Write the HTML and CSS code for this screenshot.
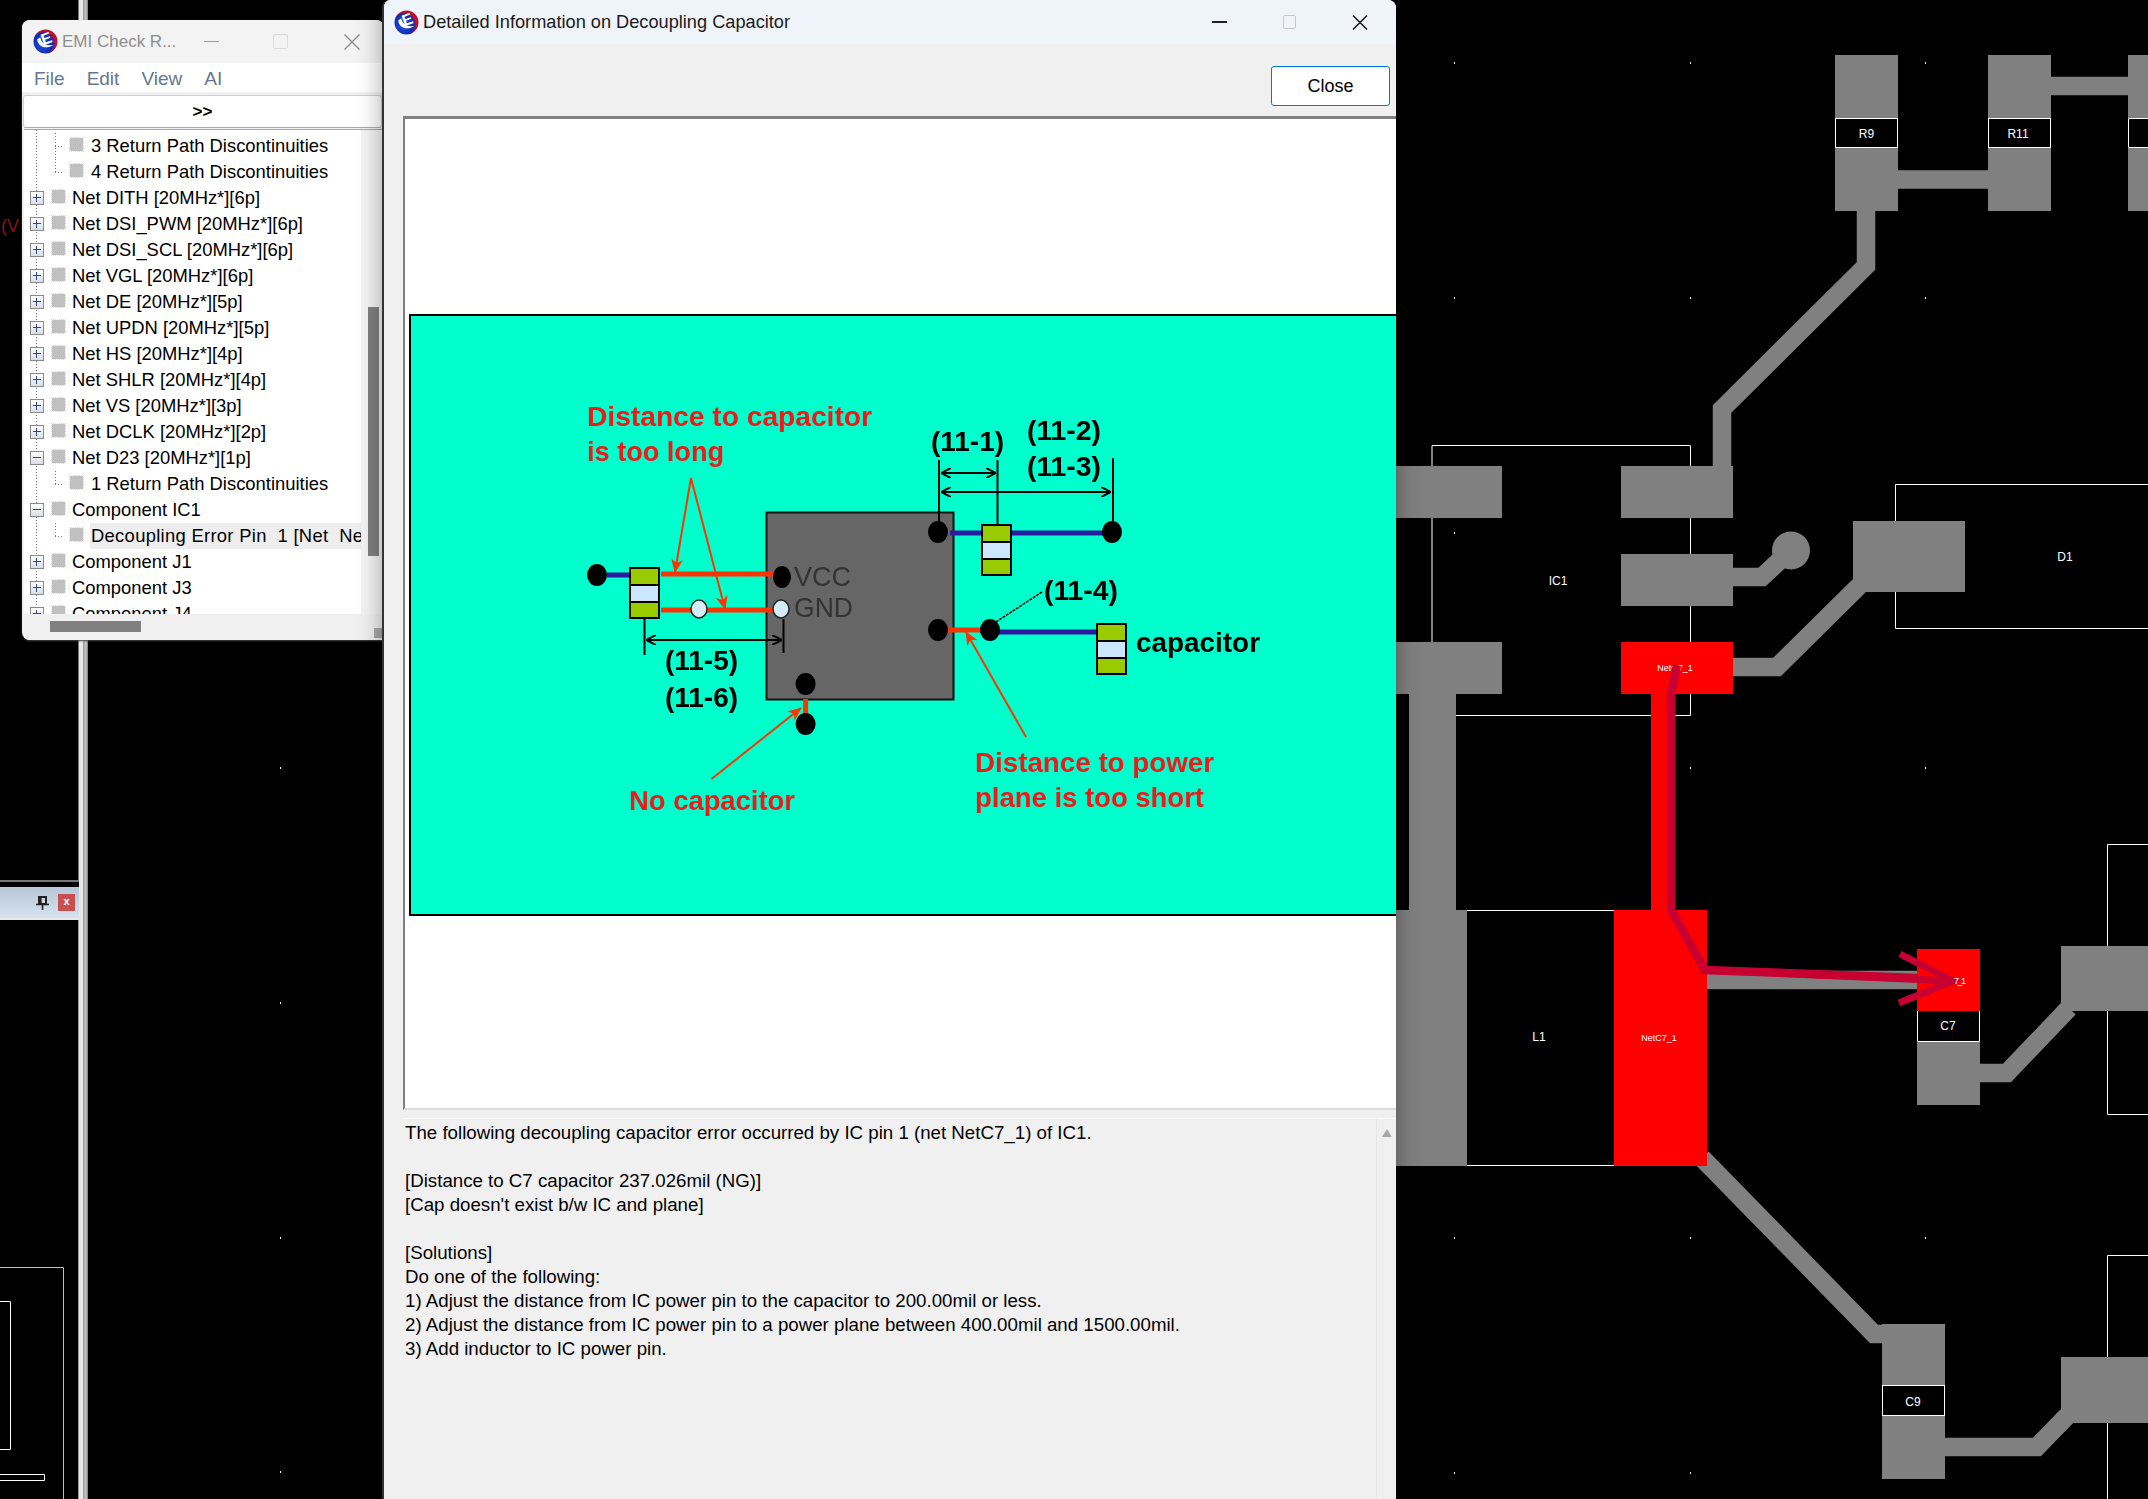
FILE: index.html
```html
<!DOCTYPE html>
<html>

<head>
    <title>Detailed Information on Decoupling Capacitor</title>
    <link rel="stylesheet" href="styles.css">
</head>

<body>
    <!-- Board canvas behind the windows -->
    <svg class="board" width="2148" height="1499" viewBox="0 0 2148 1499">
        <g fill="#808080">
            <rect x="1835" y="55" width="63" height="63" />
            <rect x="1835" y="148" width="63" height="63" />
            <rect x="1988" y="55" width="63" height="63" />
            <rect x="1988" y="148" width="63" height="63" />
            <rect x="2128" y="55" width="20" height="63" />
            <rect x="2128" y="148" width="20" height="63" />
            <rect x="1396" y="466" width="106" height="52" />
            <rect x="1621" y="466" width="112" height="52" />
            <rect x="1621" y="554" width="112" height="52" />
            <rect x="1396" y="642" width="106" height="52" />
            <rect x="1409" y="694" width="47" height="216" />
            <rect x="1396" y="910" width="71" height="256" />
            <rect x="1853" y="521" width="112" height="71" />
            <rect x="1917" y="1042" width="63" height="63" />
            <rect x="2061" y="946" width="87" height="65" />
            <rect x="1882" y="1324" width="63" height="61" />
            <rect x="1882" y="1416" width="63" height="63" />
            <rect x="2061" y="1357" width="87" height="66" />
            <circle cx="1791" cy="550.5" r="19" />
        </g>
        <g fill="none" stroke="#808080" stroke-width="18.5">
            <path d="M2051 86H2128" />
            <path d="M1898 179.5H1988" />
            <path d="M1866 211V266L1722 409V466" />
            <path d="M1733 577H1762L1791 550" />
            <path d="M1733 667H1777L1859 586" />
            <path d="M1707 980H1917" />
            <path d="M1980 1073H2007L2069 1008" />
            <path d="M1702 1158L1874 1334H1882" />
            <path d="M1945 1447H2037L2067 1416" />
        </g>
        <g fill="none" stroke="#fff" stroke-width="1">
            <path d="M1432 466V445.5H1690.5V466M1432 518V642M1690.5 518V554M1690.5 606V642M1456 715.5H1690.5V694" />
            <path d="M2148 484.5H1895.5V521M1895.5 592V628.5H2148" />
            <path d="M1467 910.5H1614M1467 1165.5H1614" />
            <path d="M2148 844.5H2107.5V946M2107.5 1011V1114.5H2148" />
            <path d="M2148 1255.5H2107.5V1357M2107.5 1423V1499" />
            <rect x="1835.5" y="118.5" width="62" height="29" />
            <rect x="1988.5" y="118.5" width="62" height="29" />
            <path d="M2148 118.5H2128.5V147.5H2148" />
            <path d="M1917.5 1011V1041.5H1979.5V1011" />
            <rect x="1882.5" y="1385.5" width="62" height="30" />
        </g>
        <g fill="#f00">
            <rect x="1621" y="642" width="112" height="52" />
            <rect x="1651" y="694" width="24" height="216" />
            <rect x="1614" y="910" width="93" height="256" />
            <rect x="1917" y="949" width="63" height="62" />
        </g>
        <g class="board-label">
            <text x="1866.5" y="138">R9</text>
            <text x="2018" y="138">R11</text>
            <text x="1558" y="585">IC1</text>
            <text x="2065" y="561">D1</text>
            <text x="1539" y="1041">L1</text>
            <text x="1948" y="1030">C7</text>
            <text x="1913" y="1406">C9</text>
        </g>
        <g class="board-label small">
            <text x="1675" y="671">NetC7_1</text>
            <text x="1659" y="1041">NetC7_1</text>
        </g>
        <g fill="none" stroke="#c80032">
            <path stroke-width="8.5" d="M1677 665L1671 693V910L1705 970L1917 978" />
            <path stroke-width="7" d="M1705 970L1953 981" />
            <path stroke-width="7" d="M1900 954L1953 981L1899 1003" />
        </g>
        <text class="board-label small" x="1960" y="984" textLength="12">7_1</text>
        <g fill="#fff">
            <rect x="1454" y="62" width="1" height="2" />
            <rect x="1690" y="62" width="1" height="2" />
            <rect x="1925" y="62" width="1" height="2" />
            <rect x="1454" y="297" width="1" height="2" />
            <rect x="1690" y="297" width="1" height="2" />
            <rect x="1925" y="297" width="1" height="2" />
            <rect x="1454" y="532" width="1" height="2" />
            <rect x="1690" y="532" width="1" height="2" />
            <rect x="1690" y="767" width="1" height="2" />
            <rect x="1925" y="767" width="1" height="2" />
            <rect x="1454" y="1237" width="1" height="2" />
            <rect x="1690" y="1237" width="1" height="2" />
            <rect x="1925" y="1237" width="1" height="2" />
            <rect x="1454" y="1472" width="1" height="2" />
            <rect x="1690" y="1472" width="1" height="2" />
            <rect x="280" y="767" width="1" height="2" />
            <rect x="280" y="1002" width="1" height="2" />
            <rect x="280" y="1237" width="1" height="2" />
            <rect x="280" y="1471" width="1" height="2" />
        </g>
        <g fill="none">
            <path stroke="#e0d000" d="M0 1267.5H63.5V1499" />
            <path stroke="#fff" d="M0 1301.5H10.5V1449.5H0" />
            <path stroke="#fff" d="M0 1474.5H44.5V1480.5H0" />
        </g>
        <text class="probe-text" x="1" y="232">(V</text>
    </svg>

    <!-- Docked panel on the far left -->
    <div class="dock">
        <div class="dock-top"></div>
        <div class="dock-title">
            <svg class="dock-pin" width="13" height="14" viewBox="0 0 13 14">
                <path d="M3 1H10V8H3Z M4.6 1V8" fill="none" stroke="#222" stroke-width="2" />
                <path d="M0 8.5H13M6.5 9V14" stroke="#222" stroke-width="1.6" />
            </svg>
            <span class="dock-close">x</span>
        </div>
        <div class="dock-body"></div>
    </div>
    <div class="splitter"></div>

    <!-- EMI Check Result window -->
    <div class="emi-window">
        <div class="emi-title">
            <svg class="app-icon" width="25" height="25" viewBox="0 0 24 24">
                <use href="#logo" />
            </svg>
            <span class="emi-name">EMI Check R...</span>
            <span class="win-btn min"></span>
            <span class="win-btn max"></span>
            <svg class="win-x" width="16" height="16" viewBox="0 0 16 16">
                <path d="M0.5 0.5L15.5 15.5M15.5 0.5L0.5 15.5" stroke="#8a8a8a" stroke-width="1.3" />
            </svg>
        </div>
        <div class="menu-bar">
            <span>File</span>
            <span>Edit</span>
            <span>View</span>
            <span>AI</span>
        </div>
        <div class="tool-button">&gt;&gt;</div>
        <div class="tree-wrap">
            <div class="tree" id="tree"></div>
            <div class="vscroll"><div class="vthumb"></div></div>
        </div>
        <div class="hscroll">
            <div class="hthumb"></div>
            <div class="grip"></div>
        </div>
    </div>

    <!-- Decoupling capacitor detail dialog -->
    <div class="dialog">
        <div class="dialog-title">
            <svg class="app-icon" width="25" height="25" viewBox="0 0 24 24">
                <defs>
                    <radialGradient id="logoFill" cx="0.38" cy="0.6" r="0.68">
                        <stop offset="0" stop-color="#2a55e0" />
                        <stop offset="0.62" stop-color="#0a2cb0" />
                        <stop offset="0.8" stop-color="#c8102e" />
                        <stop offset="1" stop-color="#b00c20" />
                    </radialGradient>
                    <g id="logo">
                        <circle cx="12" cy="12" r="11.5" fill="url(#logoFill)" />
                        <path d="M4 10C5 17 12 20 20 15C13 17 8 14 7 8Z" fill="#fff" />
                        <text x="0" y="0" class="logo-letter" transform="translate(14.5 14) rotate(-20)">E</text>
                    </g>
                </defs>
                <use href="#logo" />
            </svg>
            <span class="dialog-name">Detailed Information on Decoupling Capacitor</span>
            <span class="dlg-btn min"></span>
            <span class="dlg-btn max"></span>
            <svg class="dlg-x" width="16" height="15" viewBox="0 0 16 15">
                <path d="M1 0.5L15 14.5M15 0.5L1 14.5" stroke="#111" stroke-width="1.4" />
            </svg>
        </div>
        <div class="dialog-actions">
            <button class="close-button">Close</button>
        </div>
        <div class="image-pane">
            <svg class="diagram" width="986" height="602" viewBox="410 314 986 602">
                <defs>
                    <marker id="headRed" markerWidth="14" markerHeight="12" refX="13" refY="6" orient="auto" markerUnits="userSpaceOnUse">
                        <path d="M0 0L14 6L0 12L4 6Z" fill="#ff3300" />
                    </marker>
                    <marker id="headEnd" markerWidth="10" markerHeight="10" refX="10" refY="5" orient="auto" markerUnits="userSpaceOnUse">
                        <path d="M0 0L10 5L0 10" fill="none" stroke="#000" stroke-width="2" />
                    </marker>
                    <marker id="headStart" markerWidth="10" markerHeight="10" refX="0" refY="5" orient="auto" markerUnits="userSpaceOnUse">
                        <path d="M10 0L0 5L10 10" fill="none" stroke="#000" stroke-width="2" />
                    </marker>
                    <g id="cap">
                        <rect x="0" y="0" width="31" height="52" fill="#000" />
                        <rect x="2" y="2" width="27" height="15" fill="#99cc00" />
                        <rect x="2" y="19" width="27" height="15" fill="#cce6ff" />
                        <rect x="2" y="36" width="27" height="14" fill="#99cc00" />
                    </g>
                </defs>
                <rect x="410" y="315" width="987" height="600" fill="#00ffcc" stroke="#000" stroke-width="2" />

                <rect x="766.5" y="512.5" width="187" height="187" fill="#666" stroke="#111" stroke-width="2" />

                <!-- traces -->
                <path d="M950 533H1104M998 632H1097M607 575H630" stroke="#2a1aa0" stroke-width="5" fill="none" />
                <path d="M661 574H773M661 610H773M948 630H982M805.6 699V715" stroke="#ff3300" stroke-width="5" fill="none" />

                <use href="#cap" x="981" y="524" />
                <use href="#cap" x="629" y="567" />
                <use href="#cap" x="1096" y="623" />

                <!-- pins -->
                <g fill="#000">
                    <ellipse cx="938" cy="532" rx="10" ry="11" />
                    <ellipse cx="1112" cy="532" rx="10" ry="11" />
                    <ellipse cx="597" cy="575" rx="10" ry="11" />
                    <ellipse cx="782" cy="577" rx="9" ry="11" />
                    <ellipse cx="938" cy="630" rx="10" ry="11" />
                    <ellipse cx="990" cy="630" rx="10" ry="11" />
                    <ellipse cx="805.6" cy="684" rx="10" ry="11" />
                    <ellipse cx="805.6" cy="724" rx="10" ry="11" />
                </g>
                <g fill="#d6ecf8" stroke="#222" stroke-width="1.5">
                    <ellipse cx="781" cy="609" rx="8" ry="9" />
                    <ellipse cx="699" cy="609" rx="8" ry="9" />
                </g>

                <!-- dimension lines -->
                <g stroke="#000" stroke-width="2" fill="none">
                    <path d="M939 460V523M997.5 460V524M1113 458V523M644.5 619V655M783.5 619V653" />
                    <path d="M941 473H996" marker-start="url(#headStart)" marker-end="url(#headEnd)" />
                    <path d="M941 492H1111" marker-start="url(#headStart)" marker-end="url(#headEnd)" />
                    <path d="M646 640H782" marker-start="url(#headStart)" marker-end="url(#headEnd)" />
                    <path d="M1042 592L996 622" stroke-dasharray="3 1" stroke-width="1.5" />
                </g>

                <!-- red callouts -->
                <g stroke="#ff3300" stroke-width="2" fill="none">
                    <path d="M691 478L675 572" marker-end="url(#headRed)" />
                    <path d="M691 478L725 609" marker-end="url(#headRed)" />
                    <path d="M711.5 779L801 708" marker-end="url(#headRed)" />
                    <path d="M1026 737L966 632" marker-end="url(#headRed)" />
                </g>

                <text class="note" x="587" y="426" textLength="285" lengthAdjust="spacingAndGlyphs">Distance to capacitor</text>
                <text class="note" x="587" y="461" textLength="137" lengthAdjust="spacingAndGlyphs">is too long</text>
                <text class="note" x="629" y="810" textLength="166" lengthAdjust="spacingAndGlyphs">No capacitor</text>
                <text class="note" x="975" y="772" textLength="239" lengthAdjust="spacingAndGlyphs">Distance to power</text>
                <text class="note" x="975" y="807" textLength="229" lengthAdjust="spacingAndGlyphs">plane is too short</text>

                <text class="dim" x="931" y="451" textLength="73" lengthAdjust="spacingAndGlyphs">(11-1)</text>
                <text class="dim" x="1027" y="440" textLength="74" lengthAdjust="spacingAndGlyphs">(11-2)</text>
                <text class="dim" x="1027" y="476" textLength="74" lengthAdjust="spacingAndGlyphs">(11-3)</text>
                <text class="dim" x="1044" y="600" textLength="74" lengthAdjust="spacingAndGlyphs">(11-4)</text>
                <text class="dim" x="665" y="670" textLength="73" lengthAdjust="spacingAndGlyphs">(11-5)</text>
                <text class="dim" x="665" y="707" textLength="73" lengthAdjust="spacingAndGlyphs">(11-6)</text>
                <text class="dim" x="1136" y="652" textLength="124" lengthAdjust="spacingAndGlyphs">capacitor</text>

                <text class="pin-name" x="794" y="586" textLength="57" lengthAdjust="spacingAndGlyphs">VCC</text>
                <text class="pin-name" x="794" y="617" textLength="59" lengthAdjust="spacingAndGlyphs">GND</text>
            </svg>
        </div>
        <div class="message-pane">
            <div class="message">
                <p>The following decoupling capacitor error occurred by IC pin 1 (net NetC7_1) of IC1.</p>
                <p>&nbsp;</p>
                <p>[Distance to C7 capacitor 237.026mil (NG)]</p>
                <p>[Cap doesn't exist b/w IC and plane]</p>
                <p>&nbsp;</p>
                <p>[Solutions]</p>
                <p>Do one of the following:</p>
                <p>1) Adjust the distance from IC power pin to the capacitor to 200.00mil or less.</p>
                <p>2) Adjust the distance from IC power pin to a power plane between 400.00mil and 1500.00mil.</p>
                <p>3) Add inductor to IC power pin.</p>
            </div>
            <div class="message-scroll"><span class="scroll-up"></span></div>
        </div>
    </div>

    <script>
        // level 0 = net or component, level 1 = child entry
        const rows = [
            { level: 1, text: '3 Return Path Discontinuities' },
            { level: 1, text: '4 Return Path Discontinuities', last: true },
            { level: 0, box: 'plus', text: 'Net DITH [20MHz*][6p]' },
            { level: 0, box: 'plus', text: 'Net DSI_PWM [20MHz*][6p]' },
            { level: 0, box: 'plus', text: 'Net DSI_SCL [20MHz*][6p]' },
            { level: 0, box: 'plus', text: 'Net VGL [20MHz*][6p]' },
            { level: 0, box: 'plus', text: 'Net DE [20MHz*][5p]' },
            { level: 0, box: 'plus', text: 'Net UPDN [20MHz*][5p]' },
            { level: 0, box: 'plus', text: 'Net HS [20MHz*][4p]' },
            { level: 0, box: 'plus', text: 'Net SHLR [20MHz*][4p]' },
            { level: 0, box: 'plus', text: 'Net VS [20MHz*][3p]' },
            { level: 0, box: 'plus', text: 'Net DCLK [20MHz*][2p]' },
            { level: 0, box: 'minus', text: 'Net D23 [20MHz*][1p]' },
            { level: 1, text: '1 Return Path Discontinuities', last: true },
            { level: 0, box: 'minus', text: 'Component IC1' },
            { level: 1, text: 'Decoupling Error Pin  1 [Net  NetC7_1]', last: true, selected: true },
            { level: 0, box: 'plus', text: 'Component J1' },
            { level: 0, box: 'plus', text: 'Component J3' },
            { level: 0, box: 'plus', text: 'Component J4' }
        ];

        const tree = document.getElementById('tree');
        for (const row of rows) {
            const item = document.createElement('div');
            item.className = 'tree-row level-' + row.level;

            const lead = document.createElement('span');
            if (row.box) {
                lead.className = 'expander ' + row.box;
            } else {
                lead.className = row.last ? 'elbow last' : 'elbow';
            }
            item.appendChild(lead);

            const mark = document.createElement('span');
            mark.className = 'mark';
            item.appendChild(mark);

            const label = document.createElement('span');
            label.className = row.selected ? 'label selected' : 'label';
            label.textContent = row.text;
            item.appendChild(label);

            tree.appendChild(item);
        }
    </script>
</body>

</html>
```

FILE: styles.css
```css
html, body {
    margin: 0;
    height: 100%;
}

body {
    position: relative;
    width: 2148px;
    height: 1499px;
    overflow: hidden;
    background-color: #000;
    font-family: 'Liberation Sans', Arial, sans-serif;
    color: #000;
}

.board {
    position: absolute;
    left: 0;
    top: 0;
}

.board-label {
    fill: #fff;
    font-size: 12px;
    text-anchor: middle;
}

.board-label.small {
    font-size: 9px;
}

.probe-text {
    fill: #8a1020;
    font-size: 18px;
}

/* Left dock */
.dock {
    position: absolute;
    left: 0;
    top: 0;
    width: 79px;
    height: 1499px;
    display: flex;
    flex-direction: column;
}

.dock-top {
    height: 882px;
    box-sizing: border-box;
    border-right: 1px solid #777;
    border-bottom: 2px solid #777;
    flex: none;
}

.dock-title {
    margin-top: 5px;
    height: 31px;
    flex: none;
    display: flex;
    align-items: center;
    justify-content: flex-end;
    gap: 9px;
    padding-right: 4px;
    background: linear-gradient(#b7c6d6, #d6e3ef);
    border-bottom: 2px solid #e8e8e8;
}

.dock-close {
    width: 17px;
    height: 17px;
    background-color: #c85050;
    color: #fff;
    font-size: 11px;
    font-weight: bold;
    line-height: 15px;
    text-align: center;
}

.dock-body {
    flex: 1;
    border-right: 1px solid #999;
}

.splitter {
    position: absolute;
    left: 79px;
    top: 0;
    width: 9px;
    height: 1499px;
    background: linear-gradient(to right, #e8e8e8 0, #e8e8e8 4px, #9a9a9a 4px, #c8c8c8 7px, #777 9px);
}

/* EMI window */
.emi-window {
    position: absolute;
    left: 22px;
    top: 20px;
    width: 362px;
    height: 620px;
    box-sizing: border-box;
    display: flex;
    flex-direction: column;
    background-color: #f0f0f0;
    border-radius: 8px 8px 0 8px;
    box-shadow: 0 1px 2px #444;
    overflow: hidden;
}

.emi-title {
    height: 43px;
    flex: none;
    display: flex;
    align-items: center;
    padding-left: 11px;
    background-color: #f3f3f3;
}

.app-icon {
    flex: none;
}

.logo-letter {
    fill: #fff;
    font-size: 15px;
    font-weight: bold;
    text-anchor: middle;
}

.emi-name {
    margin-left: 4px;
    width: 134px;
    flex: none;
    font-size: 17px;
    color: #8e8e8e;
    white-space: nowrap;
}

.win-btn {
    flex: none;
    display: block;
}

.win-btn.min {
    margin-left: 8px;
    width: 15px;
    height: 1px;
    background-color: #9a9a9a;
}

.win-btn.max {
    margin-left: 54px;
    width: 13px;
    height: 13px;
    border: 1px solid #dcdcdc;
    border-radius: 2px;
}

.win-x {
    margin-left: 56px;
    flex: none;
}

.menu-bar {
    height: 29px;
    flex: none;
    display: flex;
    align-items: center;
    gap: 22px;
    padding: 2px 0 0 12px;
    box-sizing: border-box;
    background-color: #fff;
    font-size: 19px;
    color: #64778e;
}

.tool-button {
    height: 33px;
    flex: none;
    margin: 3px 2px 1px 1px;
    box-sizing: border-box;
    border: 1px solid #d0d0d0;
    border-bottom: 1px solid #aaa;
    border-radius: 3px;
    background-color: #fff;
    font-size: 17px;
    font-weight: bold;
    line-height: 31px;
    text-align: center;
}

.tree-wrap {
    flex: 1;
    min-height: 0;
    display: flex;
    margin-left: 2px;
    border-top: 1px solid #a9a9a9;
    background-color: #fff;
}

.tree {
    flex: 1;
    min-width: 0;
    overflow: hidden;
    padding-top: 3px;
    background: linear-gradient(#777 50%, transparent 50%) 12px 0 / 1px 3px repeat-y;
}

.tree-row {
    height: 26px;
    display: flex;
    align-items: center;
    font-size: 18.4px;
    white-space: nowrap;
}

.expander {
    position: relative;
    flex: none;
    width: 14px;
    height: 14px;
    margin-left: 6px;
    box-sizing: border-box;
    border: 1px solid #8a8a8a;
    background: linear-gradient(#fff, #d8dee6);
}

.expander::before {
    content: '';
    position: absolute;
    left: 2px;
    right: 2px;
    top: 5px;
    height: 1px;
    background-color: #2b4a8c;
}

.expander.plus::after {
    content: '';
    position: absolute;
    top: 2px;
    bottom: 2px;
    left: 5px;
    width: 1px;
    background-color: #2b4a8c;
}

.elbow {
    flex: none;
    width: 9px;
    height: 26px;
    margin-left: 31px;
    margin-right: 6px;
    background:
        linear-gradient(#777 50%, transparent 50%) 0 0 / 1px 3px repeat-y,
        linear-gradient(to right, #777 50%, transparent 50%) 0 13px / 3px 1px repeat-x;
}

.elbow.last {
    height: 14px;
    margin-bottom: 12px;
}

.mark {
    flex: none;
    width: 13px;
    height: 13px;
    margin-left: 8px;
    margin-bottom: 3px;
    background-color: #c0c0c0;
    outline: 1px dotted #ddd;
}

.level-1 .mark {
    margin-left: 0;
}

.label {
    margin-left: 7px;
    white-space: pre;
}

.level-1 .label {
    margin-left: 7px;
    padding-left: 1px;
}

.label.selected {
    flex: 1;
    min-width: 0;
    overflow: hidden;
    background-color: #eee;
    line-height: 26px;
    letter-spacing: 0.3px;
}

.vscroll {
    width: 23px;
    flex: none;
    background-color: #f4f4f4;
}

.vthumb {
    width: 11px;
    height: 249px;
    margin: 177px 0 0 7px;
    background-color: #808080;
}

.hscroll {
    position: relative;
    height: 26px;
    flex: none;
    margin-left: 2px;
    background-color: #f0f0f0;
}

.hthumb {
    width: 91px;
    height: 11px;
    margin: 7px 0 0 26px;
    background-color: #808080;
}

.grip {
    position: absolute;
    right: 0;
    bottom: 2px;
    width: 10px;
    height: 10px;
    background: radial-gradient(circle, #aaa 1.5px, transparent 2px) 0 0 / 3px 3px;
}

/* Detail dialog */
.dialog {
    position: absolute;
    left: 382px;
    top: 0;
    width: 1014px;
    height: 1499px;
    box-sizing: border-box;
    border-left: 2px solid #333;
    display: flex;
    flex-direction: column;
    background-color: #f0f0f0;
    border-radius: 8px 8px 0 0;
    box-shadow: 0 0 24px rgba(0, 0, 0, 0.35);
    overflow: hidden;
}

.dialog-title {
    height: 44px;
    flex: none;
    display: flex;
    align-items: center;
    padding-left: 10px;
    background-color: #eff3fa;
}

.dialog-name {
    margin-left: 4px;
    width: 789px;
    flex: none;
    font-size: 18.2px;
    color: #1a1a1a;
    white-space: nowrap;
}

.dlg-btn {
    flex: none;
    display: block;
}

.dlg-btn.min {
    width: 15px;
    height: 2px;
    background-color: #222;
}

.dlg-btn.max {
    margin-left: 56px;
    width: 13px;
    height: 14px;
    box-sizing: border-box;
    border: 1px solid #c8c8c8;
    border-radius: 2px;
}

.dlg-x {
    margin-left: 56px;
    flex: none;
}

.dialog-actions {
    height: 72px;
    flex: none;
    display: flex;
    justify-content: flex-end;
    box-sizing: border-box;
    padding: 22px 6px 0 0;
}

.close-button {
    width: 119px;
    height: 40px;
    background-color: #fff;
    border: 1px solid #0078d4;
    border-radius: 3px;
    font-family: 'Liberation Sans', Arial, sans-serif;
    font-size: 18px;
    color: #000;
    padding: 0;
}

.image-pane {
    height: 994px;
    flex: none;
    margin-left: 19px;
    box-sizing: border-box;
    border-top: 3px solid #808080;
    border-left: 2px solid #808080;
    border-bottom: 2px solid #ddd;
    background-color: #fff;
    overflow: hidden;
}

.diagram {
    display: block;
    margin: 195px 0 0 5px;
    overflow: visible;
    filter: blur(0.6px);
}

.note {
    fill: #f01818;
    font-size: 27px;
    font-weight: bold;
}

.dim {
    fill: #000;
    font-size: 28px;
    font-weight: bold;
}

.pin-name {
    fill: #333;
    font-size: 28px;
}

.message-pane {
    flex: 1;
    min-height: 0;
    display: flex;
    margin: 8px 0 0 19px;
    border-top: 1px solid #fafafa;
}

.message {
    flex: 1;
    padding: 2px 0 0 2px;
    font-size: 18.7px;
    line-height: 24px;
}

.message p {
    margin: 0;
    white-space: nowrap;
}

.message-scroll {
    width: 19px;
    flex: none;
    background-color: #f0f0f0;
    border-left: 1px solid #e6e6e6;
}

.scroll-up {
    display: block;
    width: 0;
    height: 0;
    margin: 10px 0 0 5px;
    border-left: 5px solid transparent;
    border-right: 5px solid transparent;
    border-bottom: 8px solid #a8a8a8;
}
```
